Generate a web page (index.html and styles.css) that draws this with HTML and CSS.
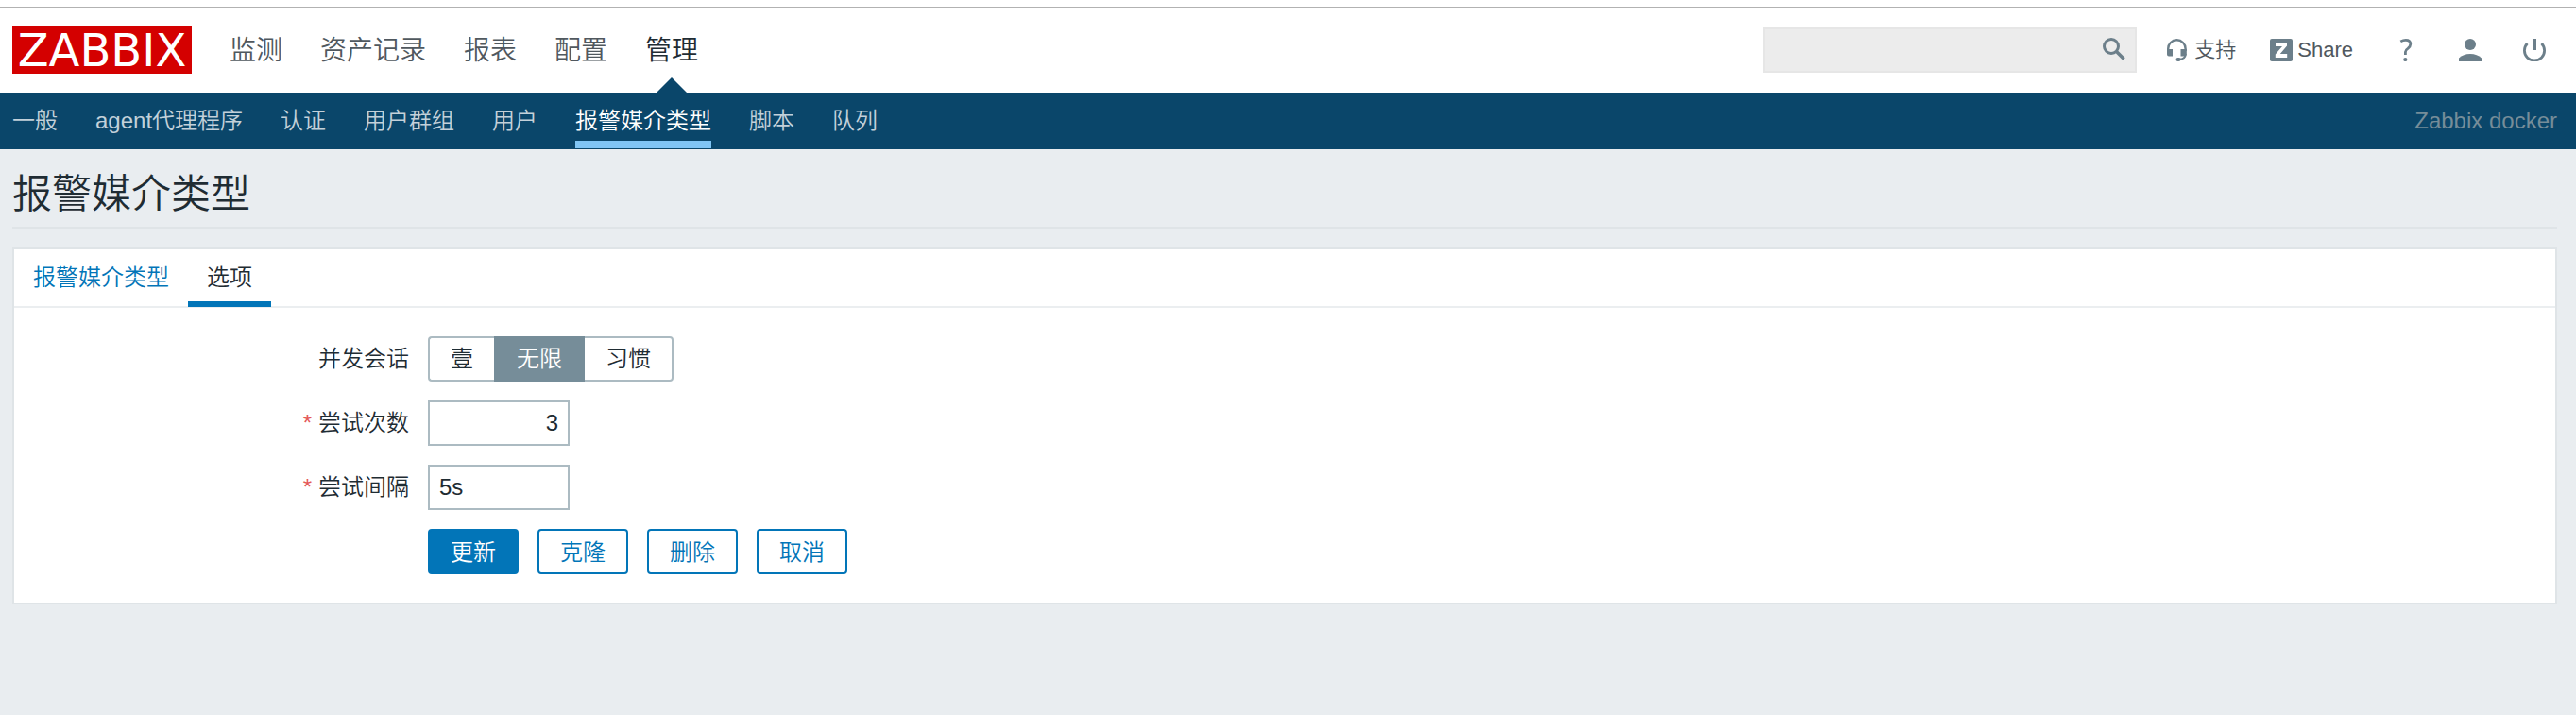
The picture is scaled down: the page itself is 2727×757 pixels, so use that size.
FILE: index.html
```html
<!DOCTYPE html>
<html lang="zh-CN">
<head>
<meta charset="utf-8">
<title>报警媒介类型</title>
<link rel="stylesheet" href="styles.css">
</head>
<body>
<header class="top">
  <a class="logo" href="#">ZABBIX</a>
  <nav class="main-menu">
    <a href="#">监测</a>
    <a href="#">资产记录</a>
    <a href="#">报表</a>
    <a href="#">配置</a>
    <a class="selected" href="#">管理</a>
  </nav>
  <form class="search">
    <input type="text" aria-label="搜索">
    <button type="button" aria-label="搜索">
      <svg viewBox="0 0 24 24"><circle cx="9" cy="9" r="7.5" fill="none" stroke="currentColor" stroke-width="3"/><path d="M14.5 14.5L22.5 22.5" stroke="currentColor" stroke-width="3.6"/></svg>
    </button>
  </form>
  <nav class="tools">
    <a class="tool support" href="#">
      <svg viewBox="0 0 24 24"><path d="M1.200 13V10.500a9.200 9.200 0 0 1 18.400 0V13" fill="none" stroke="currentColor" stroke-width="2.400"/><path d="M0 11h6v7.500H2a2 2 0 0 1-2-2zM14.500 11h6.300v5.500a2 2 0 0 1-2 2H14.500z" fill="currentColor"/><path d="M19.700 16q0 5.500-7 5.800" fill="none" stroke="currentColor" stroke-width="2"/><rect x="9.500" y="20" width="5" height="4" rx="2" fill="currentColor"/></svg>
      <span>支持</span>
    </a>
    <a class="tool share" href="#">
      <svg viewBox="0 0 24 24"><rect width="24" height="24" rx="2" fill="currentColor"/><path d="M6 4h12v3.500L10.800 16H18.200v4H5.800v-3.500L13 8H6z" fill="#fff"/></svg>
      <span>Share</span>
    </a>
    <a class="tool" href="#" aria-label="帮助">
      <svg viewBox="0 0 24 24"><path d="M6.300 2.900Q9 1.400 11.800 1.400Q16.800 1.400 16.800 5.600Q16.800 8.200 14 10.400Q11.400 12 11.400 14V17" fill="none" stroke="currentColor" stroke-width="2.800"/><circle cx="11.300" cy="22" r="2.100" fill="currentColor"/></svg>
    </a>
    <a class="tool" href="#" aria-label="用户资料">
      <svg viewBox="0 0 24 24"><circle cx="12" cy="6" r="6" fill="currentColor"/><path d="M0 24V20.500Q4.500 16 12 16T24 20.500V24z" fill="currentColor"/></svg>
    </a>
    <a class="tool" href="#" aria-label="退出">
      <svg viewBox="0 0 24 24"><path d="M4.500 4.900A10.600 10.600 0 1 0 19.500 4.900" fill="none" stroke="currentColor" stroke-width="2.800"/><path d="M12 0V12" stroke="currentColor" stroke-width="4"/></svg>
    </a>
  </nav>
</header>
<nav class="sub-menu">
  <a href="#">一般</a>
  <a href="#">agent代理程序</a>
  <a href="#">认证</a>
  <a href="#">用户群组</a>
  <a href="#">用户</a>
  <a class="selected" href="#">报警媒介类型</a>
  <a href="#">脚本</a>
  <a href="#">队列</a>
  <span class="server">Zabbix docker</span>
</nav>
<main>
  <h1>报警媒介类型</h1>
  <section class="panel">
    <nav class="tabs">
      <a href="#">报警媒介类型</a>
      <a class="selected" href="#">选项</a>
    </nav>
    <form class="fields">
      <span class="label" id="sessions">并发会话</span>
      <div class="segments" role="radiogroup" aria-labelledby="sessions">
        <label><input type="radio" name="sessions"><span>壹</span></label>
        <label><input type="radio" name="sessions" checked><span>无限</span></label>
        <label><input type="radio" name="sessions"><span>习惯</span></label>
      </div>
      <label class="label required" for="attempts">尝试次数</label>
      <input class="text number" id="attempts" type="text" value="3">
      <label class="label required" for="interval">尝试间隔</label>
      <input class="text" id="interval" type="text" value="5s">
      <div class="actions">
        <button class="primary" type="button">更新</button>
        <button type="button">克隆</button>
        <button type="button">删除</button>
        <button type="button">取消</button>
      </div>
    </form>
  </section>
</main>
</body>
</html>
```
FILE: styles.css
```css
* {
  box-sizing: border-box;
}

html {
  background: #e9edf0;
}

body {
  margin: 0;
  color: #1f2c33;
  font: 350 24px/32px "Liberation Sans", "Noto Sans CJK SC", sans-serif;
}

a {
  color: inherit;
  text-decoration: none;
}

button,
input {
  font: inherit;
  color: inherit;
}

svg {
  display: block;
  width: 24px;
  height: 24px;
}

.top {
  position: relative;
  display: flex;
  align-items: center;
  height: 98px;
  padding: 8px 20px 0 13px;
  background: linear-gradient(#fff 7px, #b2b2b2 7px, #b2b2b2 8px, #fff 8px);
}

.logo {
  width: 190px;
  background: #d40000;
  color: #fff;
  font: 48px/50px "DejaVu Sans", sans-serif;
  text-align: center;
}

.main-menu {
  display: flex;
  gap: 40px;
  align-self: stretch;
  margin-left: 40px;
  color: #50585e;
  font-size: 28px;
  line-height: 92px;
}

.main-menu .selected {
  position: relative;
  color: #1f2c33;
}

.main-menu .selected::after {
  content: "";
  position: absolute;
  bottom: 0;
  left: 50%;
  margin-left: -16px;
  border: 16px solid transparent;
  border-top: 0;
  border-bottom-color: #0a466a;
}

.search {
  position: relative;
  width: 396px;
  margin-left: auto;
}

.search input {
  display: block;
  width: 100%;
  height: 48px;
  padding: 0 48px 0 8px;
  border: 2px solid #e6e6e6;
  background: #ececec;
}

.search button {
  position: absolute;
  top: 11px;
  right: 12px;
  padding: 0;
  border: 0;
  background: none;
  color: #6c7f8a;
}

.tools {
  display: flex;
  align-items: center;
  margin-left: 32px;
  color: #6c7f8a;
  font-size: 22px;
}

.tool {
  display: flex;
  align-items: center;
  gap: 5px;
  margin-right: 44px;
}

.tool:last-child {
  margin-right: 12px;
}

.tool span {
  color: #50585e;
}

.support {
  margin-right: 36px;
}

.sub-menu {
  display: flex;
  gap: 40px;
  height: 60px;
  padding: 0 20px 0 13px;
  background: #0a466a;
  color: #c3d1da;
  line-height: 60px;
}

.sub-menu .selected {
  height: 59px;
  border-bottom: 8px solid #80c5f4;
  color: #fff;
}

.server {
  margin-left: auto;
  color: #768d99;
}

main {
  padding: 0 20px 0 13px;
}

h1 {
  margin: 0 0 20px;
  padding: 18px 0 4px;
  border-bottom: 2px solid #dfe4e7;
  font-size: 42px;
  font-weight: 350;
  line-height: 60px;
}

.panel {
  border: 2px solid #dfe4e7;
  background: #fff;
}

.tabs {
  display: flex;
  height: 62px;
  border-bottom: 2px solid #ebeef0;
  line-height: 60px;
}

.tabs a {
  height: 61px;
  padding: 0 20px;
  color: #0275b8;
}

.tabs .selected {
  border-bottom: 6px solid #0275b8;
  color: #1f2c33;
}

.fields {
  display: grid;
  grid-template-columns: 418px 1fr;
  gap: 20px;
  align-items: center;
  justify-items: start;
  padding: 30px 0;
}

.label {
  justify-self: end;
}

.required::before {
  content: "*";
  margin-right: 7px;
  color: #e45959;
}

.text {
  width: 150px;
  height: 48px;
  padding: 0 10px;
  border: 2px solid #acbbc2;
  background: #fff;
}

.number {
  text-align: right;
}

.segments {
  display: flex;
}

.segments label {
  position: relative;
}

.segments input {
  position: absolute;
  inset: 0;
  margin: 0;
  opacity: 0;
}

.segments span {
  display: block;
  height: 48px;
  padding: 0 22px;
  border: 2px solid #acbbc2;
  border-width: 2px 0;
  line-height: 44px;
}

.segments label:first-child span {
  border-left-width: 2px;
  border-radius: 4px 0 0 4px;
}

.segments label:last-child span {
  border-right-width: 2px;
  border-radius: 0 4px 4px 0;
}

.segments input:checked + span {
  padding: 0 24px;
  border-color: #768d99;
  background: #768d99;
  color: #fff;
}

.actions {
  display: flex;
  gap: 20px;
  grid-column: 2;
}

.actions button {
  height: 48px;
  padding: 2px 22px 0;
  border: 2px solid #0275b8;
  border-radius: 4px;
  background: #fff;
  color: #0275b8;
  line-height: 42px;
}

.actions .primary {
  background: #0275b8;
  color: #fff;
}
```
